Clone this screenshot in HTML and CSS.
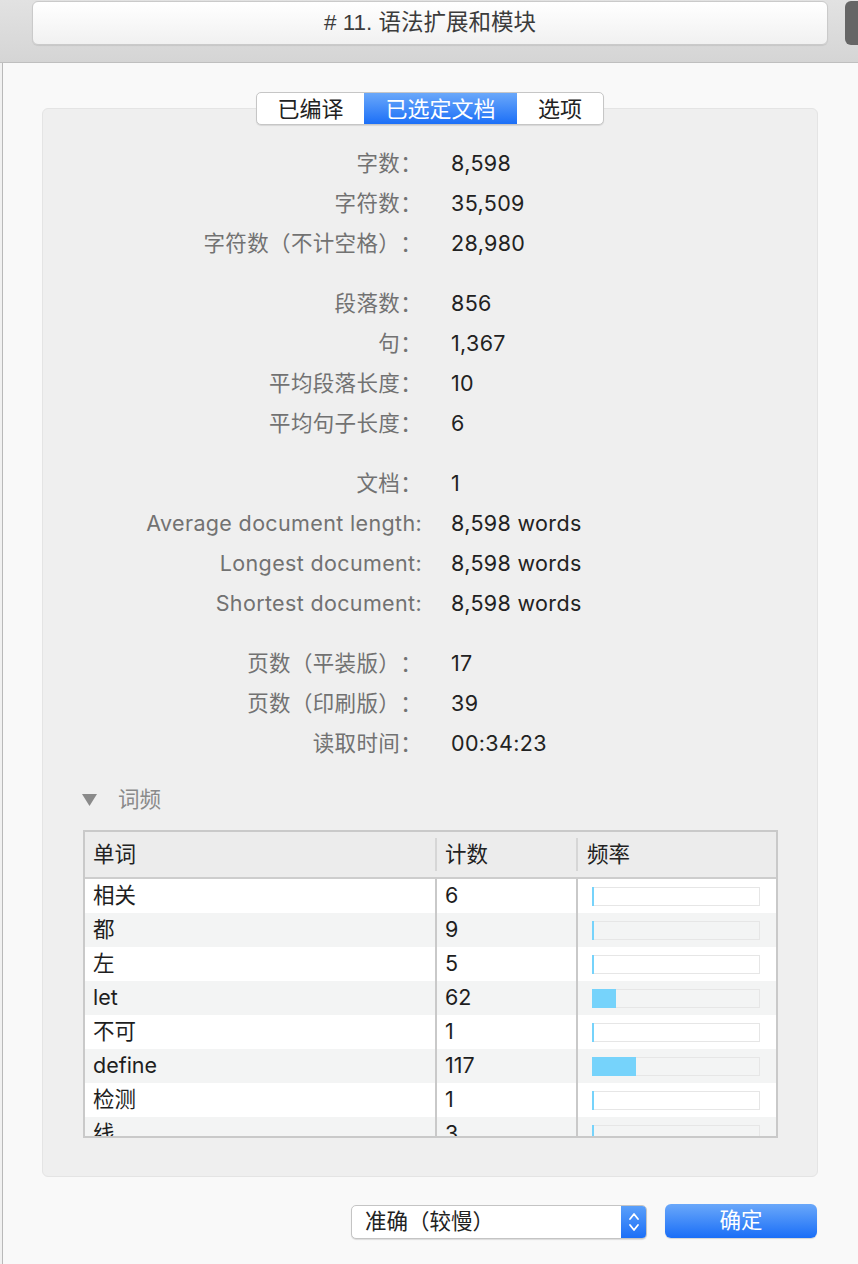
FILE: index.html
```html
<!DOCTYPE html>
<html lang="zh-CN">
<head>
<meta charset="utf-8">
<title>统计</title>
<link rel="stylesheet" href="styles.css">
</head>
<body>
<div class="topbar">
  <div class="titlefield"># 11. 语法扩展和模块</div>
  <div class="sidebtn"></div>
</div>
<div class="window">
  <div class="edge"></div>
  <div class="sheet">
    <div class="segmented">
      <div class="seg seg-a">已编译</div>
      <div class="seg seg-b active">已选定文档</div>
      <div class="seg seg-c">选项</div>
    </div>
    <div class="groupbox">
      <div class="stat-group">
        <div class="row"><span class="label">字数：</span><span class="value">8,598</span></div>
        <div class="row"><span class="label">字符数：</span><span class="value">35,509</span></div>
        <div class="row"><span class="label">字符数（不计空格）：</span><span class="value">28,980</span></div>
      </div>
      <div class="stat-group">
        <div class="row"><span class="label">段落数：</span><span class="value">856</span></div>
        <div class="row"><span class="label">句：</span><span class="value">1,367</span></div>
        <div class="row"><span class="label">平均段落长度：</span><span class="value">10</span></div>
        <div class="row"><span class="label">平均句子长度：</span><span class="value">6</span></div>
      </div>
      <div class="stat-group">
        <div class="row"><span class="label">文档：</span><span class="value">1</span></div>
        <div class="row"><span class="label">Average document length:</span><span class="value">8,598 words</span></div>
        <div class="row"><span class="label">Longest document:</span><span class="value">8,598 words</span></div>
        <div class="row"><span class="label">Shortest document:</span><span class="value">8,598 words</span></div>
      </div>
      <div class="stat-group">
        <div class="row"><span class="label">页数（平装版）：</span><span class="value">17</span></div>
        <div class="row"><span class="label">页数（印刷版）：</span><span class="value">39</span></div>
        <div class="row"><span class="label">读取时间：</span><span class="value">00:34:23</span></div>
      </div>
      <div class="disclosure">
        <svg class="tri" width="15" height="12" viewBox="0 0 15 12"><polygon points="0,0 15,0 7.5,12" fill="#8a8a8a"/></svg>
        <span>词频</span>
      </div>
      <div class="table">
        <div class="thead">
          <div class="th">单词</div>
          <div class="th">计数</div>
          <div class="th th-last">频率</div>
        </div>
        <div class="tr"><div class="td">相关</div><div class="td">6</div><div class="td td-bar"><div class="bar"><div class="fill" style="width:2px"></div></div></div></div>
        <div class="tr"><div class="td">都</div><div class="td">9</div><div class="td td-bar"><div class="bar"><div class="fill" style="width:2px"></div></div></div></div>
        <div class="tr"><div class="td">左</div><div class="td">5</div><div class="td td-bar"><div class="bar"><div class="fill" style="width:2px"></div></div></div></div>
        <div class="tr"><div class="td">let</div><div class="td">62</div><div class="td td-bar"><div class="bar"><div class="fill" style="width:24px"></div></div></div></div>
        <div class="tr"><div class="td">不可</div><div class="td">1</div><div class="td td-bar"><div class="bar"><div class="fill" style="width:2px"></div></div></div></div>
        <div class="tr"><div class="td">define</div><div class="td">117</div><div class="td td-bar"><div class="bar"><div class="fill" style="width:44px"></div></div></div></div>
        <div class="tr"><div class="td">检测</div><div class="td">1</div><div class="td td-bar"><div class="bar"><div class="fill" style="width:2px"></div></div></div></div>
        <div class="tr tr-cut"><div class="td">线</div><div class="td">3</div><div class="td td-bar"><div class="bar"><div class="fill" style="width:2px"></div></div></div></div>
      </div>
    </div>
    <div class="footer">
      <div class="popup">
        <span class="popup-text">准确（较慢）</span>
        <span class="stepper">
          <svg width="12" height="22" viewBox="0 0 12 22"><polyline points="2,8 6,3 10,8" fill="none" stroke="#fff" stroke-width="1.8" stroke-linecap="round" stroke-linejoin="round"/><polyline points="2,14 6,19 10,14" fill="none" stroke="#fff" stroke-width="1.8" stroke-linecap="round" stroke-linejoin="round"/></svg>
        </span>
      </div>
      <div class="okbtn">确定</div>
    </div>
  </div>
</div>
</body>
</html>
```

FILE: styles.css
```css
* { box-sizing: border-box; }

html, body {
  margin: 0;
  padding: 0;
}

body {
  width: 858px;
  height: 1264px;
  overflow: hidden;
  background: #f9f9f9;
  font-family: Inter, "Noto Sans CJK SC", sans-serif;
  font-size: 21.5px;
  color: #222;
  text-spacing-trim: space-all;
}

/* ---------- top toolbar ---------- */
.topbar {
  height: 63px;
  display: flex;
  align-items: flex-start;
  padding-top: 1px;
  padding-left: 32px;
  gap: 17px;
  background: linear-gradient(#e2e2e2, #d5d5d5);
  border-bottom: 1px solid #bfbfbf;
}

.titlefield {
  width: 796px;
  height: 44px;
  border: 1px solid #cacaca;
  border-radius: 6px;
  background: linear-gradient(#ffffff, #f1f1f1);
  box-shadow: 0 1px 1px rgba(0, 0, 0, 0.08);
  display: flex;
  align-items: center;
  justify-content: center;
  color: #3c3c3c;
  font-family: "Liberation Sans", "Noto Sans CJK SC", sans-serif;
  font-size: 22.5px;
  line-height: 1;
}

.sidebtn {
  flex: 1;
  height: 44px;
  background: #666;
  border-radius: 6px 0 0 6px;
}

/* ---------- window ---------- */
.window {
  display: flex;
  height: 1201px;
}

.edge {
  width: 3px;
  background: #f1f1f1;
  border-right: 1px solid #b9b9b9;
}

.sheet {
  flex: 1;
  padding: 29px 40px 0 39px;
  display: flex;
  flex-direction: column;
}

/* ---------- segmented control ---------- */
.segmented {
  position: relative;
  z-index: 1;
  align-self: center;
  display: flex;
  height: 33px;
  border: 1px solid #c6c6c6;
  border-radius: 5px;
  background: #fff;
  box-shadow: 0 1px 1px rgba(0, 0, 0, 0.1);
  overflow: hidden;
}

.seg {
  display: flex;
  align-items: center;
  justify-content: center;
  color: #222;
  font-size: 22px;
  line-height: 1;
}

.seg-a { width: 107px; }
.seg-b { width: 153px; }
.seg-c { width: 86px; }

.seg.active {
  color: #fff;
  background: linear-gradient(#6aa8fa, #1c6ff7);
}

/* ---------- group box ---------- */
.groupbox {
  margin-top: -17px;
  height: 1069px;
  background: #efefef;
  border: 1px solid #e4e4e4;
  border-radius: 6px;
  padding-top: 35px;
}

.stat-group {
  margin-bottom: 20px;
}

.row {
  display: grid;
  grid-template-columns: 379px 1fr;
  column-gap: 29px;
  height: 40px;
  align-items: center;
  line-height: 1;
  letter-spacing: 0.35px;
}

.label {
  text-align: right;
  color: #727272;
  white-space: nowrap;
}

.value {
  color: #222;
}

/* ---------- disclosure ---------- */
.disclosure {
  margin-top: -4px;
  height: 40px;
  display: flex;
  align-items: center;
  padding-left: 39px;
  color: #8a8a8a;
  line-height: 1;
}

.tri {
  margin-right: 21px;
}

/* ---------- table ---------- */
.table {
  margin: 10px 0 0 40px;
  width: 695px;
  height: 308px;
  border: 2px solid #c9c9c9;
  background: #fff;
  overflow: hidden;
}

.thead {
  display: grid;
  grid-template-columns: 352px 141px 1fr;
  height: 47px;
  align-items: center;
  background: #ececec;
  border-bottom: 2px solid #cdcdcd;
}

.th {
  height: 33px;
  line-height: 33px;
  padding-left: 8px;
  border-right: 2px solid #d6d6d6;
  color: #222;
}

.th-last {
  border-right: none;
  padding-left: 9px;
}

.tr {
  display: grid;
  grid-template-columns: 352px 141px 1fr;
  height: 34px;
  background: #fff;
}

.tr:nth-of-type(odd) {
  background: #f3f4f4;
}

.td {
  display: flex;
  align-items: center;
  padding-left: 8px;
  border-right: 2px solid #c9c9c9;
  line-height: 1;
  color: #1e1e1e;
}

.tr-cut .td {
  align-items: flex-start;
  padding-top: 6px;
}

.tr-cut .td-bar {
  padding-top: 8px;
}

.td-bar {
  border-right: none;
  padding-left: 14px;
}

.bar {
  width: 168px;
  height: 19px;
  box-shadow: inset 0 0 0 1px #e6e6e6;
  display: flex;
}

.fill {
  height: 100%;
  background: #76d3fb;
}

/* ---------- footer ---------- */
.footer {
  margin-top: 27px;
  display: flex;
  justify-content: flex-end;
  align-items: flex-start;
  gap: 18px;
  padding-right: 1px;
}

.popup {
  width: 296px;
  height: 34px;
  margin-top: 1px;
  display: flex;
  border: 1px solid #c4c4c4;
  border-radius: 5px;
  background: #fff;
  box-shadow: 0 1px 1px rgba(0, 0, 0, 0.12);
  overflow: hidden;
}

.popup-text {
  flex: 1;
  display: flex;
  align-items: center;
  padding-left: 13px;
  color: #222;
  line-height: 1;
}

.stepper {
  width: 25px;
  display: flex;
  align-items: center;
  justify-content: center;
  background: linear-gradient(#5a9ffa, #1c6ff7);
}

.okbtn {
  width: 152px;
  height: 34px;
  border-radius: 6px;
  background: linear-gradient(#6aa8fa, #1a6ef7);
  box-shadow: 0 1px 1px rgba(0, 0, 0, 0.15);
  color: #fff;
  display: flex;
  align-items: center;
  justify-content: center;
  line-height: 1;
}
```
